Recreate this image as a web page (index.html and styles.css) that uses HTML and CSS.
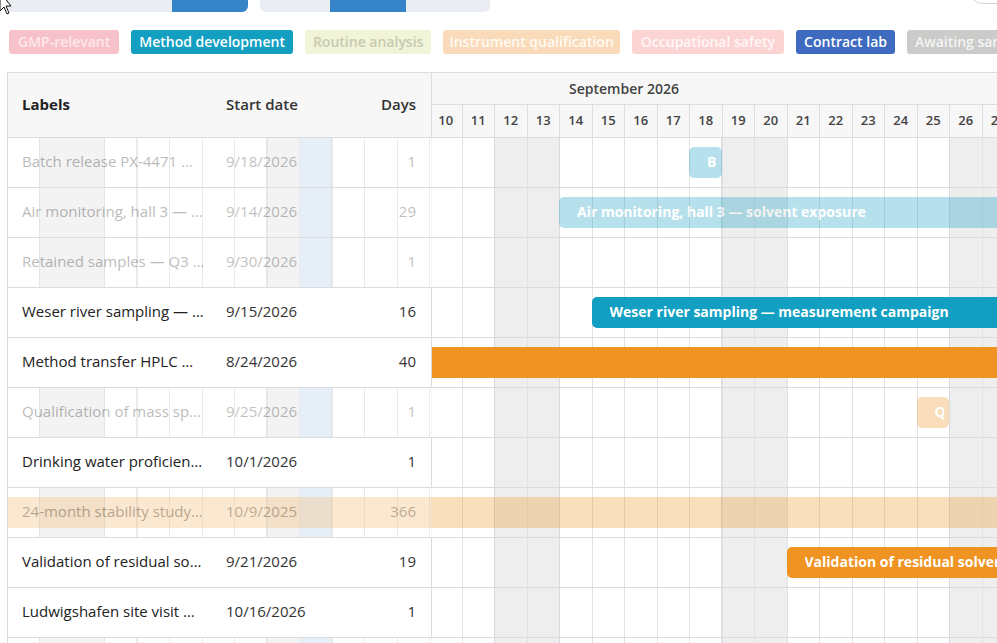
FILE: index.html
```html
<!DOCTYPE html>
<html lang="en">
<head>
<meta charset="utf-8">
<title>Lab planning</title>
<link rel="stylesheet" href="styles.css">
</head>
<body>
<svg class="cursor" width="14" height="22" viewBox="0 0 14 22"><path d="M1 -8 L1 11 L5 7 L8 14 L10 13 L7 6 L12 6 Z" fill="#fff" stroke="#111" stroke-width="1"/></svg>
<div class="toolbar">
  <div class="seg seg-a"><span class="seg-on"></span></div>
  <div class="seg seg-b"><span class="seg-on"></span></div>
  <div class="round-btn"></div>
</div>
<div class="chips">
  <span class="chip chip-gmp">GMP-relevant</span>
  <span class="chip chip-method">Method development</span>
  <span class="chip chip-routine">Routine analysis</span>
  <span class="chip chip-instr">Instrument qualification</span>
  <span class="chip chip-safety">Occupational safety</span>
  <span class="chip chip-contract">Contract lab</span>
  <span class="chip chip-await">Awaiting samples</span>
</div>
<div class="gantt">
  <div class="head">
    <div class="head-left">
      <span class="h-label">Labels</span>
      <span class="h-date">Start date</span>
      <span class="h-days">Days</span>
    </div>
    <div class="head-time">
      <div class="month-row"><div class="month">September 2026</div></div>
      <div class="day-row">
        <span class="day">10</span><span class="day">11</span><span class="day">12</span><span class="day">13</span><span class="day">14</span><span class="day">15</span><span class="day">16</span><span class="day">17</span><span class="day">18</span><span class="day">19</span><span class="day">20</span><span class="day">21</span><span class="day">22</span><span class="day">23</span><span class="day">24</span><span class="day">25</span><span class="day">26</span><span class="day">27</span><span class="day">28</span>
      </div>
    </div>
  </div>
  <div class="body">
    <div class="row faded">
      <div class="bar teal" style="margin-left:681px;width:32.5px"><span class="bar-text">Batch release PX-4471</span></div>
      <div class="cells"><span class="c-label">Batch release PX-4471 …</span><span class="c-date">9/18/2026</span><span class="c-days">1</span></div>
    </div>
    <div class="row faded">
      <div class="bar teal" style="margin-left:551px;width:942.5px"><span class="bar-text">Air monitoring, hall 3 — solvent exposure</span></div>
      <div class="cells"><span class="c-label">Air monitoring, hall 3 — …</span><span class="c-date">9/14/2026</span><span class="c-days">29</span></div>
    </div>
    <div class="row faded">
      <div class="bar teal" style="margin-left:1071px;width:32.5px"><span class="bar-text">Retained samples — Q3 review</span></div>
      <div class="cells"><span class="c-label">Retained samples — Q3 …</span><span class="c-date">9/30/2026</span><span class="c-days">1</span></div>
    </div>
    <div class="row">
      <div class="bar teal" style="margin-left:583.5px;width:520px"><span class="bar-text">Weser river sampling — measurement campaign</span></div>
      <div class="cells"><span class="c-label">Weser river sampling — …</span><span class="c-date">9/15/2026</span><span class="c-days">16</span></div>
    </div>
    <div class="row">
      <div class="bar orange" style="margin-left:-131.5px;width:1300px"></div>
      <div class="cells"><span class="c-label">Method transfer HPLC …</span><span class="c-date">8/24/2026</span><span class="c-days">40</span></div>
    </div>
    <div class="row faded">
      <div class="bar orange" style="margin-left:908.5px;width:32.5px"><span class="bar-text">Qualification of mass spectrometer</span></div>
      <div class="cells"><span class="c-label">Qualification of mass sp…</span><span class="c-date">9/25/2026</span><span class="c-days">1</span></div>
    </div>
    <div class="row">
      <div class="bar teal" style="margin-left:1103.5px;width:32.5px"><span class="bar-text">Drinking water proficiency test</span></div>
      <div class="cells"><span class="c-label">Drinking water proficien…</span><span class="c-date">10/1/2026</span><span class="c-days">1</span></div>
    </div>
    <div class="row faded">
      <div class="bar orange" style="margin-left:-10499px;width:11895px"></div>
      <div class="cells"><span class="c-label">24-month stability study…</span><span class="c-date">10/9/2025</span><span class="c-days">366</span></div>
    </div>
    <div class="row">
      <div class="bar orange" style="margin-left:778.5px;width:617.5px"><span class="bar-text">Validation of residual solvents method</span></div>
      <div class="cells"><span class="c-label">Validation of residual so…</span><span class="c-date">9/21/2026</span><span class="c-days">19</span></div>
    </div>
    <div class="row">
      <div class="bar teal" style="margin-left:1591px;width:32.5px"><span class="bar-text">Ludwigshafen site visit</span></div>
      <div class="cells"><span class="c-label">Ludwigshafen site visit …</span><span class="c-date">10/16/2026</span><span class="c-days">1</span></div>
    </div>
    <div class="row faded">
      <div class="cells"><span class="c-label">Reference standards …</span><span class="c-date">10/20/2026</span><span class="c-days">1</span></div>
    </div>
  </div>
</div>
</body>
</html>
```
FILE: styles.css
```css
html, body {
  margin: 0;
  padding: 0;
  overflow: hidden;
  background: #fff;
}
body {
  font-family: "Open Sans", "Noto Sans", sans-serif;
  color: #262626;
  width: 997px;
  height: 643px;
  position: relative;
}
.cursor {
  position: absolute;
  left: -1px;
  top: 0;
  z-index: 10;
}
.toolbar {
  display: flex;
  align-items: flex-start;
  height: 32px;
  margin-top: -20px;
  padding-left: 5px;
}
.seg {
  height: 32px;
  background: #e9edf1;
  border-radius: 6px;
  display: flex;
  overflow: hidden;
}
.seg-a { width: 243px; justify-content: flex-end; }
.seg-b { width: 230px; margin-left: 12px; padding-left: 70px; box-sizing: border-box; }
.seg-on {
  width: 76px;
  height: 100%;
  background: #3584c8;
}
.round-btn {
  margin-left: auto;
  margin-right: -15px;
  width: 42px;
  height: 24px;
  border: 1px solid #d4d4d4;
  border-radius: 12px;
  background: #fff;
  box-sizing: border-box;
}
.chips {
  display: flex;
  gap: 12px;
  margin-top: 18px;
  padding-left: 9px;
  white-space: nowrap;
}
.chip {
  flex: 0 0 auto;
  height: 24px;
  line-height: 24px;
  padding: 0 8px;
  border-radius: 3px;
  font-size: 14px;
  font-weight: 600;
  color: #fff;
}
.chip-gmp { background: #f7c1ca; color: #fde8eb; padding: 0 9px; }
.chip-method { background: #129fc2; }
.chip-routine { background: #f1f4d6; color: #c7cab4; }
.chip-instr { background: #fadbb9; color: #fffaf4; padding: 0 6px; }
.chip-safety { background: #fdd4d4; color: #fff7f7; padding: 0 9px; }
.chip-contract { background: #3e6bbf; }
.chip-await { background: #cbcbc9; color: #f4f4f4; }

.gantt {
  margin-top: 18px;
  margin-left: 7px;
  width: 1100px;
  border: 1px solid #dcdcdc;
  border-right: 0;
  overflow: hidden;
}
.head {
  display: flex;
  height: 65px;
  border-bottom: 1px solid #dcdcdc;
  box-sizing: border-box;
  background: #f7f7f7;
}
.head-left {
  flex: 0 0 424px;
  box-sizing: border-box;
  border-right: 1px solid #dcdcdc;
  display: flex;
  align-items: center;
  padding-bottom: 2px;
  font-size: 15px;
  color: #222;
}
.h-label { flex: 0 0 204px; padding-left: 14px; box-sizing: border-box; font-weight: 700; }
.h-date { flex: 0 0 140px; padding-left: 14px; box-sizing: border-box; font-weight: 600; color: #333; }
.h-days { flex: 1; text-align: right; padding-right: 15px; font-weight: 600; color: #333; }
.head-time {
  flex: 1;
  overflow: hidden;
  display: flex;
  flex-direction: column;
}
.month-row {
  height: 32px;
  border-bottom: 1px solid #dcdcdc;
  box-sizing: border-box;
  overflow: hidden;
}
.month {
  margin-left: -295.5px;
  width: 975px;
  text-align: center;
  line-height: 31px;
  font-size: 14px;
  font-weight: 600;
  color: #444;
}
.day-row {
  display: flex;
  height: 32px;
  margin-left: -3px;
}
.day {
  flex: 0 0 32.5px;
  box-sizing: border-box;
  border-left: 1px solid #dedede;
  text-align: center;
  line-height: 31px;
  font-size: 13px;
  font-weight: 600;
  color: #444;
}
.body {
  background:
    repeating-linear-gradient(to right, transparent 0 31px, #d6dbdf 31px 32px, transparent 32px 96px, #d6dbdf 96px 97px, transparent 97px 227.5px),
    repeating-linear-gradient(to right, transparent 0 31px, #e2e2e2 31px 32px, transparent 32px 32.5px),
    linear-gradient(#dce8f6, #dce8f6) 291px 0 / 32.5px 100% no-repeat,
    repeating-linear-gradient(to right, transparent 0 31px, #eeeeee 31px 96px, transparent 96px 227.5px),
    #fff;
}
.row {
  display: grid;
  grid-template-columns: 100%;
  height: 50px;
  box-sizing: border-box;
  border-bottom: 1px solid #dcdcdc;
}
.bar {
  grid-area: 1 / 1;
  justify-self: start;
  align-self: center;
  display: flex;
  height: 31px;
  line-height: 30px;
  box-sizing: border-box;
  padding: 0 5px 0 18px;
  border-radius: 5px;
  white-space: nowrap;
  overflow: hidden;
  font-size: 14px;
  font-weight: 700;
  color: #fff;
}
.bar-text {
  overflow: hidden;
  min-width: 0;
}
.teal { background: #129fc2; }
.orange { background: #ef9423; }
.cells {
  grid-area: 1 / 1;
  justify-self: start;
  position: relative;
  z-index: 1;
  width: 424px;
  box-sizing: border-box;
  border-right: 1px solid #dcdcdc;
  background: #fff;
  display: flex;
  align-items: center;
  padding-bottom: 3px;
  font-size: 15px;
  white-space: nowrap;
}
.c-label { flex: 0 0 204px; padding-left: 14px; box-sizing: border-box; overflow: hidden; color: #222; }
.c-date { flex: 0 0 140px; padding-left: 14px; box-sizing: border-box; color: #333; }
.c-days { flex: 1; text-align: right; padding-right: 15px; color: #333; }
.faded .cells, .faded .bar { opacity: 0.3; }
```
